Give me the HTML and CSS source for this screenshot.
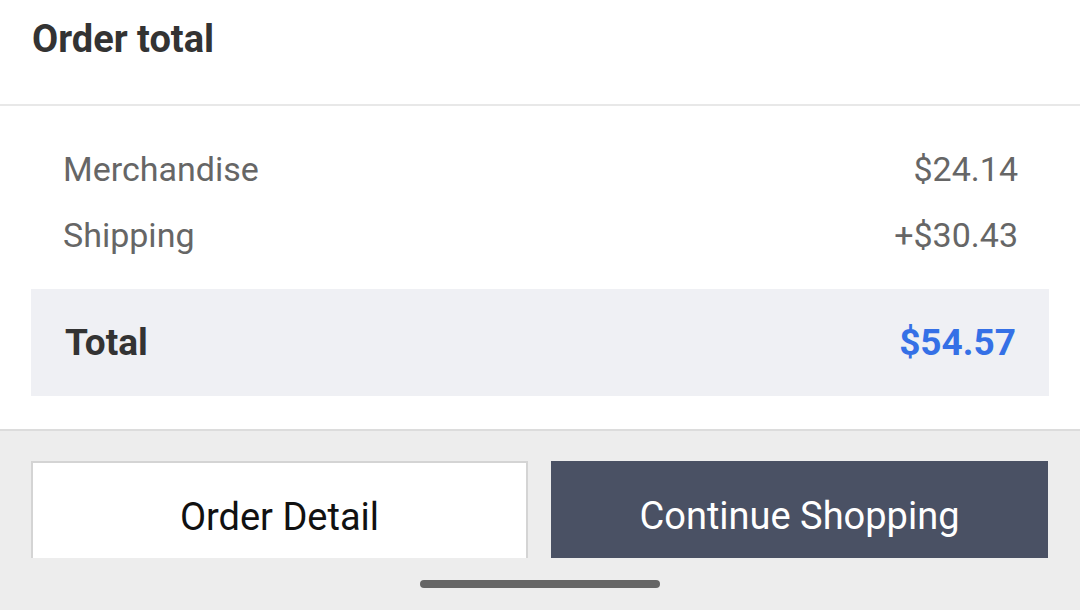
FILE: index.html
```html
<!DOCTYPE html>
<html>
<head>
<meta charset="utf-8">
<link rel="stylesheet" href="styles.css">
</head>
<body>
<div class="page">
  <div class="header"><h1 class="title">Order total</h1></div>
  <div class="summary">
    <div class="row"><span>Merchandise</span><span>$24.14</span></div>
    <div class="row"><span>Shipping</span><span>+$30.43</span></div>
    <div class="total"><span class="total-label">Total</span><span class="total-value">$54.57</span></div>
  </div>
  <div class="footer">
    <div class="buttons">
      <div class="btn btn-light">Order Detail</div>
      <div class="btn btn-dark">Continue Shopping</div>
    </div>
    <div class="home-bar"></div>
  </div>
</div>
</body>
</html>
```
FILE: styles.css
```css
html, body {
  margin: 0;
  padding: 0;
}
body {
  width: 1080px;
  height: 610px;
  overflow: hidden;
  background: #ffffff;
  font-family: Roboto, "Liberation Sans", sans-serif;
}
.page {
  display: flex;
  flex-direction: column;
  height: 610px;
}
.header {
  height: 106px;
  border-bottom: 2px solid #e8e8e8;
  padding-left: 32px;
  box-sizing: border-box;
  display: flex;
  align-items: flex-start;
}
.title {
  margin: 13px 0 0 0;
  font-size: 38px;
  font-weight: 700;
  color: #333333;
  line-height: 52px;
}
.summary {
  padding: 30px 31px 33px 31px;
  border-bottom: 2px solid #dcdcdc;
}
.row {
  display: flex;
  justify-content: space-between;
  height: 66px;
  align-items: center;
  padding: 0 31px 0 32px;
  font-size: 34px;
  color: #666666;
}
.total {
  margin-top: 21px;
  height: 107px;
  background: #eff0f4;
  display: flex;
  justify-content: space-between;
  align-items: center;
  padding: 0 33px 0 34px;
  font-size: 37px;
  font-weight: 700;
}
.total-label {
  color: #333333;
}
.total-value {
  color: #3570e6;
}
.footer {
  flex: 1;
  background: #ededed;
  display: flex;
  flex-direction: column;
  align-items: center;
}
.buttons {
  display: flex;
  gap: 23px;
  padding: 30px 31px 0 31px;
  width: 100%;
  box-sizing: border-box;
}
.btn {
  width: 497px;
  flex: none;
  height: 97px;
  box-sizing: border-box;
  display: flex;
  align-items: center;
  justify-content: center;
  font-size: 38px;
  padding-top: 12px;
}
.btn-light {
  background: #ffffff;
  border: 2px solid #d4d4d4;
  border-bottom: none;
  color: #111111;
}
.btn-dark {
  background: #4a5164;
  color: #ffffff;
}
.home-bar {
  margin-top: 22px;
  width: 240px;
  height: 8px;
  border-radius: 4px;
  background: #666666;
}
```
